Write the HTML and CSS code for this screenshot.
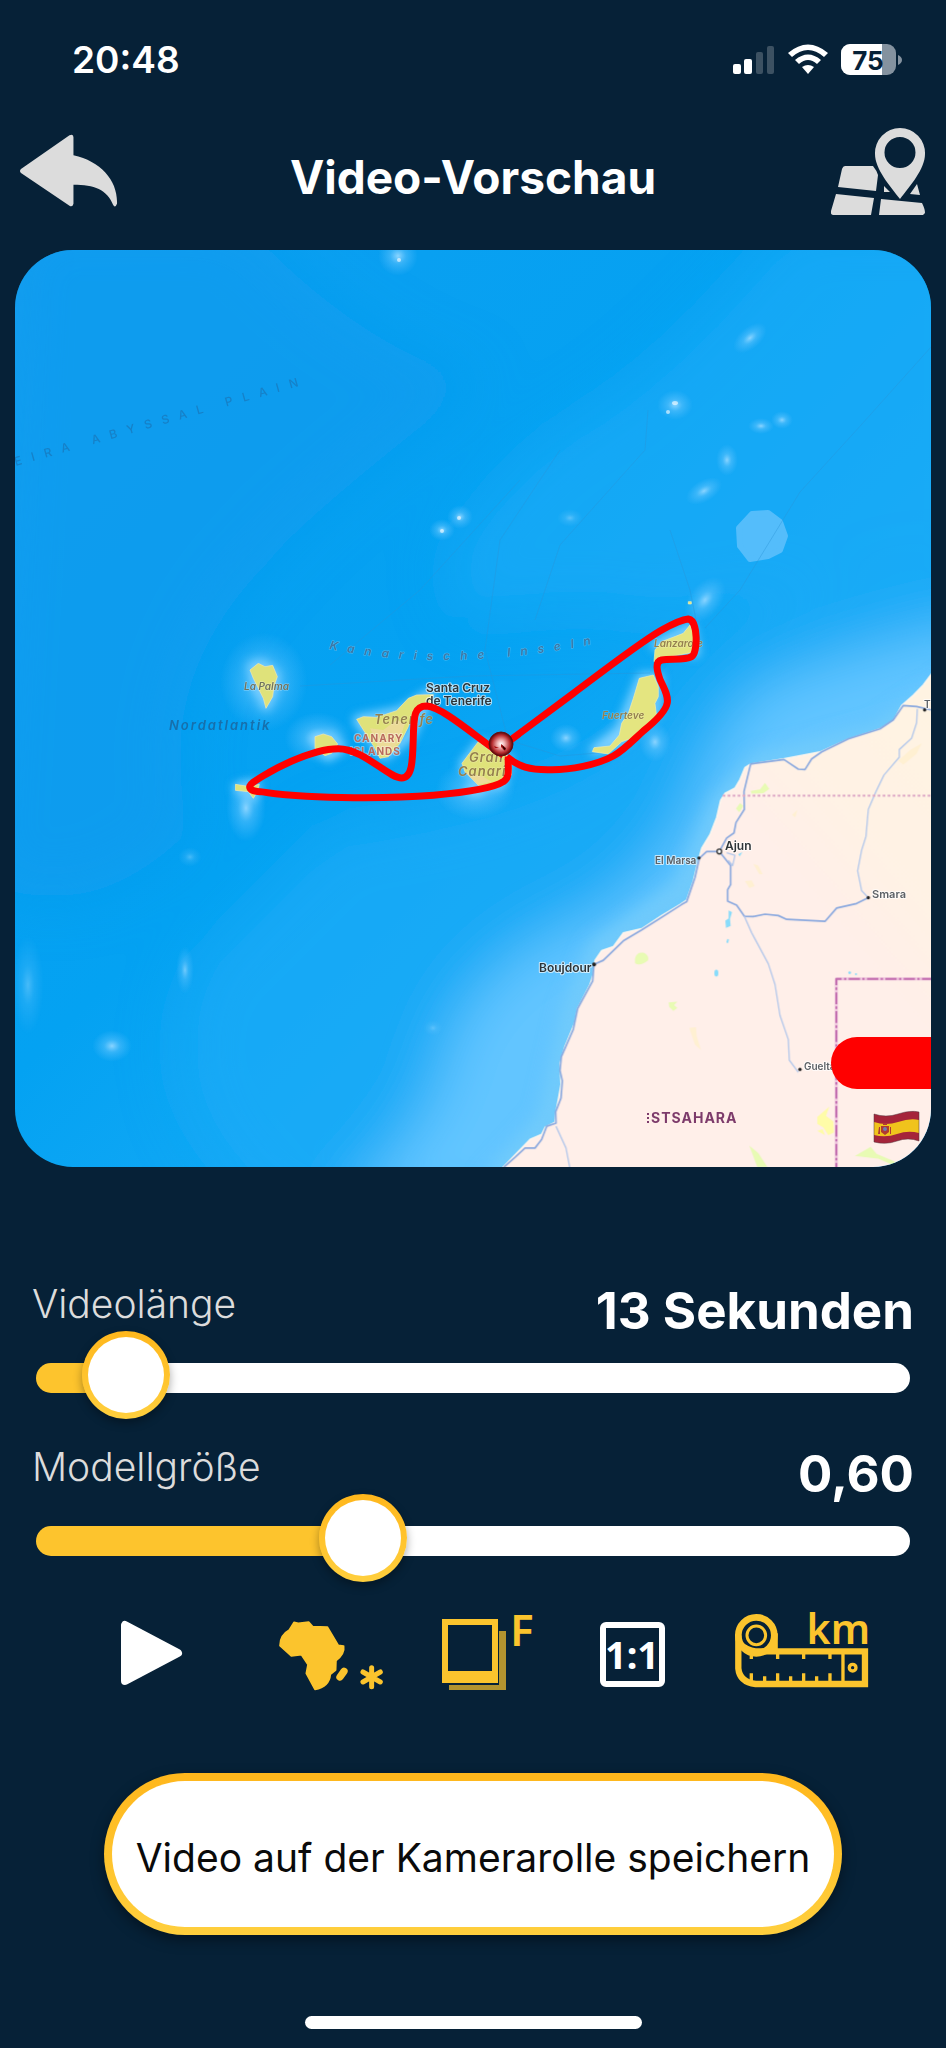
FILE: index.html
```html
<!DOCTYPE html>
<html lang="de">
<head>
<meta charset="utf-8">
<meta name="viewport" content="width=device-width, initial-scale=1">
<title>Video-Vorschau</title>
<link rel="stylesheet" href="styles.css">
</head>
<body class="screen">
<div class="status">
  <time class="clock">20:48</time>
  <svg class="status-icons" viewBox="733 43 170 34" role="img" aria-label="Mobilfunk, WLAN, Akku 75 Prozent">
    <g fill="#fff">
      <rect x="733" y="64" width="8" height="10" rx="2"/><rect x="744" y="59" width="8" height="15" rx="2"/>
      <rect x="756" y="52" width="7" height="22" rx="2" opacity=".22"/><rect x="767" y="46" width="7" height="28" rx="2" opacity=".22"/>
      <path d="M788 53 Q808 36 828 53 L824 57 Q808 43 792 57Z"/>
      <path d="M795 60 Q808 49 821 60 L817 64 Q808 56 799 64Z"/>
      <path d="M802 67 Q808 63 814 67 L808 74Z"/>
    </g>
    <clipPath id="cell"><rect x="841" y="44" width="55" height="31" rx="9"/></clipPath>
    <g clip-path="url(#cell)"><path fill="#84929f" d="M841 44h55v31h-55z"/><path fill="#fff" d="M841 44h41v31h-41z"/></g>
    <path fill="#84929f" d="M898 55q4 2 4 5t-4 5z"/>
    <text class="battery-text" x="868" y="70" text-anchor="middle">75</text>
  </svg>
</div>
<header class="bar">
  <button class="icon-btn" aria-label="Zurück">
    <svg class="back" viewBox="19 132 99 76"><path d="M20 168 L69 134 Q73 132 73 136 V154 C101 160 118 180 117 203 Q115 208 113 204 C107 189 94 184 73 184 V203 Q72 207 69 205 L20 172 Q18 170 20 168Z"/></svg>
  </button>
  <h1 class="title">Video-Vorschau</h1>
  <button class="icon-btn" aria-label="Karte">
    <svg class="map-icon" viewBox="831 127 95 89">
      <path d="M845 166h28q4 5 5 9l-2 16-38-4 4-18q1-3 3-3ZM836 194l38 4-3 17h-38q-3-1-2-4ZM881 199l41 4q3 6 3 10l-2 2h-44ZM884 186l6 6-6-0ZM917 184l3 11-10-1Z"/>
      <path fill-rule="evenodd" d="M900 128a25 25 0 0 1 25 26c0 15-15 32-25 45c-10-13-25-30-25-45a25 25 0 0 1 25-26Zm0 9a15 15 0 1 0 0 31a15 15 0 0 0 0-31Z"/>
    </svg>
  </button>
</header>
<main class="content">
<svg class="map" viewBox="15 250 916 917" role="img" aria-label="Karte der Kanarischen Inseln mit Reiseroute">
  <defs>
    <linearGradient id="sea" x2="1" y2="1"><stop offset="0" stop-color="#0e9ef0"/><stop offset=".45" stop-color="#04a2f2"/><stop offset="1" stop-color="#2db4fb"/></linearGradient>
    <radialGradient id="ball" cx=".5" cy=".5" r=".5"><stop offset="0" stop-color="#fff"/><stop offset=".3" stop-color="#f1b5b5"/><stop offset=".75" stop-color="#b52a2d"/><stop offset="1" stop-color="#4a0608"/></radialGradient>
    <radialGradient id="glow"><stop offset="0" stop-color="#8ad4ff"/><stop offset=".4" stop-color="#6cc8ff" stop-opacity=".45"/><stop offset="1" stop-color="#5cc0ff" stop-opacity="0"/></radialGradient>
    <linearGradient id="soil" x1="1" y1="0" x2=".55" y2=".45"><stop offset="0" stop-color="#fff4e2"/><stop offset=".55" stop-color="#fff2e5"/><stop offset=".8" stop-color="#ffefe9"/></linearGradient>
    <filter id="b30" x="-50%" y="-50%" width="200%" height="200%"><feGaussianBlur stdDeviation="28"/></filter>
    <filter id="b8" x="-50%" y="-50%" width="200%" height="200%"><feGaussianBlur stdDeviation="9"/></filter>
    <filter id="b4" x="-50%" y="-50%" width="200%" height="200%"><feGaussianBlur stdDeviation="5"/></filter>
    <path id="arc" d="M329 649 Q460 676 625 637"/>
    <path id="plain" d="M16 466 Q160 425 360 369"/>
  </defs>
  <path fill="url(#sea)" d="M15 250h916v917H15z"/>
  <g filter="url(#b30)">
    <path fill="#0e9bee" d="M15 220H240Q360 350 480 380Q300 520 270 560Q150 680 190 830Q90 930 -20 880Z" opacity=".8"/>
    <path fill="#1babf7" d="M990 220H790Q660 380 560 430Q400 560 470 620Q600 600 660 620L990 560Z" opacity=".7"/>
    <path fill="#1babf7" d="M330 830Q560 800 640 720Q780 560 990 560V900L400 1220H280Q130 1100 200 960Z" opacity=".7"/>
    <path fill="#62c5ff" d="M990 620Q840 650 755 690Q710 740 690 810Q650 885 580 920Q460 970 440 1070Q430 1120 330 1220H560L700 970L990 760Z"/>
  </g>
  <path filter="url(#b8)" fill="none" stroke="#72cbfb" stroke-width="24" d="M960 680L880 736 760 766 722 806 685 890 600 950 575 1010 550 1120 490 1187"/>
  <g fill="none" stroke="#7fd0ff" stroke-width="10" stroke-linejoin="round" filter="url(#b4)">
    <path d="M252 666L262 664 275 675 272 692 266 706 257 685ZM315 740L332 736 340 748 328 756ZM358 720L400 712 430 694 410 735 385 755ZM464 765L480 745 508 760 500 785 480 785ZM238 788L255 785 252 798ZM642 678L658 678 655 712 620 742 595 750 620 730ZM656 645L690 628 695 652Z"/>
  </g>
  <g fill="url(#glow)">
    <ellipse cx="264" cy="682" rx="44" ry="50"/><ellipse cx="318" cy="738" rx="34" ry="26"/><ellipse cx="246" cy="808" rx="20" ry="34"/><ellipse cx="475" cy="790" rx="40" ry="30"/>
    <ellipse cx="705" cy="600" rx="16" ry="26" transform="rotate(38 705 600)"/><ellipse cx="566" cy="738" rx="16" ry="14"/><ellipse cx="655" cy="742" rx="16" ry="20"/>
    <ellipse cx="675" cy="405" rx="18" ry="15"/><ellipse cx="750" cy="338" rx="20" ry="11" transform="rotate(-40 750 338)"/><ellipse cx="761" cy="426" rx="13" ry="8"/><ellipse cx="782" cy="420" rx="11" ry="9"/><ellipse cx="727" cy="460" rx="11" ry="16"/><ellipse cx="704" cy="491" rx="20" ry="11" transform="rotate(-30 704 491)"/>
    <ellipse cx="442" cy="530" rx="13" ry="11"/><ellipse cx="460" cy="517" rx="13" ry="12"/><ellipse cx="570" cy="518" rx="13" ry="9" opacity=".6"/><ellipse cx="398" cy="256" rx="20" ry="20"/>
    <ellipse cx="112" cy="1046" rx="20" ry="16"/><ellipse cx="185" cy="970" rx="9" ry="24" opacity=".8"/><ellipse cx="28" cy="985" rx="16" ry="50" opacity=".5"/><ellipse cx="190" cy="857" rx="12" ry="10" opacity=".5"/><ellipse cx="433" cy="1028" rx="10" ry="8" opacity=".5"/>
  </g>
  <g fill="#fff" opacity=".6">
    <ellipse cx="675" cy="403" rx="3" ry="2"/><circle cx="668" cy="412" r="2"/><circle cx="442" cy="531" r="2"/><circle cx="459" cy="518" r="2"/><circle cx="399" cy="260" r="2"/>
  </g>
  <path fill="#54bdfb" stroke="#54bdfb" stroke-width="6" stroke-linejoin="round" d="M752 514L768 513 780 522 785 536 780 550 768 556 750 559 740 546 739 528Z"/>
  <g fill="none" stroke="#2a93d6" stroke-width="1" opacity=".4">
    <path d="M931 347L862 424 800 492 740 590 705 628M648 410L645 450 560 545 535 620M560 450L500 540 485 650 508 740M330 665L420 590 520 480M670 530L690 590 700 640M300 686L470 676 650 673M508 740L560 756 610 752"/>
  </g>
  <g transform="translate(480 640) scale(.3333 .3444)" stroke-linejoin="round">
    <path fill="url(#soil)" stroke="#fff7ee" stroke-width="4" d="M1380 75L1353 100 1330 130 1300 160 1265 190 1240 235 1200 258 1100 290 1020 325 910 345 812 360 795 370 780 405 765 430 735 445 722 465 710 515 690 565 665 605 655 640 640 700 620 755 600 768 545 800 485 838 430 850 400 890 365 902 345 930 340 970 330 1000 293 1070 285 1110 255 1180 240 1230 243 1290 228 1370 225 1400 195 1415 185 1435 150 1450 115 1485 60 1540V1600H1380Z"/>
    <g fill="#e8fbb4">
      <path d="M812 438L840 434 855 415 868 432 850 445 815 446ZM768 490L780 474 790 482 778 500ZM465 925Q470 905 490 908 508 915 504 930 480 948 465 938ZM566 1052L592 1050 582 1060 592 1068 580 1077 568 1065ZM808 1468L835 1490 862 1530H832ZM1125 1498L1172 1472 1190 1492 1245 1515 1240 1525 1195 1506Z"/>
      <path fill="#fffca8" d="M1012 1385L1048 1355 1038 1382 1060 1398 1062 1430 1045 1438 1030 1415 1012 1405ZM1012 1425L1028 1420 1035 1438Z"/>
      <path fill="#fff0d2" d="M628 1126L648 1124 650 1150 663 1190 645 1175ZM795 700L815 698 824 715 808 720ZM820 650L835 655 848 680 838 680ZM936 508L952 493 946 515ZM1255 350L1290 320 1325 300 1310 330 1270 362Z"/>
    </g>
    <g fill="#88dcfb"><path d="M746 785L756 790 750 810 752 830 738 836 736 815 746 808ZM742 868l5 2-3 10-5-2Z"/><ellipse cx="709" cy="967" rx="6" ry="10"/><circle cx="1109" cy="966" r="4"/><circle cx="1128" cy="970" r="3"/><path d="M775 622l12-6-8 12Z"/></g>
    <g fill="none" stroke="#8ba9df" stroke-width="5">
      <path d="M1353 203L1310 193 1270 190 1240 232 1200 258 1105 287 1025 325 995 345 975 376 955 375 912 347 812 360 792 440 793 492 768 530 762 560 740 575 718 614 680 614 658 634 645 690 620 760 605 768 485 842 432 872 370 930 342 942 338 990 293 1070 280 1130 244 1210 240 1250 247 1280 243 1330 227 1370 228 1403 200 1412 185 1450 165 1475 135 1475 105 1502 72 1530M718 614L752 655V710L743 725V758L770 770 793 802 820 803 855 796 895 800 920 811 1035 817 1070 778 1130 765 1165 748"/>
      <path stroke="#b4c8eb" stroke-width="4" d="M1312 200L1310 240 1295 285 1258 318V340L1212 392 1188 440 1165 492 1158 570 1145 610 1133 670 1145 728 1165 748M793 802L815 850 865 940 885 1000 900 1090 925 1160 928 1220 955 1255M228 1412L258 1475 270 1535M740 618L765 625 758 655 745 640"/>
    </g>
    <path fill="none" stroke="#dda6c5" stroke-width="6" stroke-dasharray="8 7" d="M728 452H1360"/>
    <path fill="none" stroke="#efc6de" stroke-width="9" d="M1360 984H1069V1540"/>
    <path fill="none" stroke="#c26caf" stroke-width="6" stroke-dasharray="34 7 7 7" d="M1360 984H1069V1540"/>
    <g fill="#222"><circle cx="657" cy="633" r="5"/><circle cx="1165" cy="748" r="5"/><circle cx="342" cy="942" r="6"/><circle cx="960" cy="1247" r="5"/><circle cx="1334" cy="203" r="5"/></g>
    <circle cx="718" cy="614" r="7" fill="#fff" stroke="#333" stroke-width="4"/>
  </g>
  <g transform="translate(150 600) scale(.3333)" fill="#dfe27a" stroke="#f6e7b0" stroke-width="2" stroke-linejoin="round">
    <path d="M300 210L325 190 345 200 368 196 382 230 372 258 368 290 348 325 340 295 310 235ZM495 410L520 402 545 410 563 432 545 460 525 467 495 445ZM256 553L300 560 328 553 322 575 310 595 295 575 256 571ZM620 358L640 350 680 352 740 332 775 295 800 285 850 284 840 310 790 335 775 380 750 430 715 470 690 475 672 440ZM936 490L985 425 1025 455 1085 470 1085 525 1035 560 985 556 945 515Z"/>
    <path fill="#efd9a0" stroke="none" d="M660 385L700 390 740 360 765 370 745 430 710 460 690 465 680 430ZM945 515L1000 530 1025 545 985 554Z" opacity=".8"/>
  </g>
  <g transform="translate(440 580) scale(.3333)" fill="#e4e580" stroke="#f3edb0" stroke-width="2" stroke-linejoin="round">
    <path d="M745 65h9v7h-9ZM645 210L665 185 730 160 750 135 765 170 768 215 700 228 655 240 642 245ZM598 295L640 285 655 320 655 350 645 370 650 410 615 450 590 470 545 485 505 522 457 515 462 503 510 498 538 465 545 430 565 400 580 355Z"/>
  </g>
  <g class="place">
    <text class="p10 sea" x="244" y="690">La Palma</text>
    <text class="p13 ocean" x="169" y="730">Nordatlantik</text>
    <text class="p12 chain"><textPath href="#arc">Kanarische Inseln</textPath></text>
    <text class="p12 abyss"><textPath href="#plain">EIRA ABYSSAL PLAIN</textPath></text>
    <text class="p13 isle" x="374" y="724">Tenerife</text>
    <text class="p10 region" x="354" y="742">CANARY</text>
    <text class="p10 region" x="350" y="755">ISLANDS</text>
    <text class="p13 isle" x="469" y="762">Gran</text>
    <text class="p13 isle" x="458" y="776">Canari</text>
    <text class="p10 isle tight" x="654" y="647">Lanzarote</text>
    <text class="p10 isle tight" x="602" y="719">Fuerteve</text>
    <text class="p12 city" x="426" y="692">Santa Cruz</text>
    <text class="p12 city" x="426" y="705">de Tenerife</text>
    <text class="p12 city" x="725" y="850">Ajun</text>
    <text class="p12 city" x="539" y="972">Boujdour</text>
    <text class="p10 town" x="655" y="864">El Marsa</text>
    <text class="p11 town" x="872" y="898">Smara</text>
    <text class="p10 town" x="804" y="1070">Guelta</text>
    <text class="p10 town" x="924" y="708">T</text>
    <text class="p14 country" x="651" y="1123">STSAHARA</text>
  </g>
  <path stroke="#7d3b6b" stroke-width="2" stroke-dasharray="2 2" d="M648 1113v10"/>
  <g fill="none" stroke="#f00" stroke-width="21" stroke-linejoin="round">
    <path transform="translate(150 600) scale(.3333)" d="M1060 465C1000 430 880 320 830 318C790 318 792 355 790 410C788 480 788 534 755 534C715 534 640 446 565 446C480 446 355 515 308 548C290 562 300 573 330 575C500 600 740 595 850 586C950 577 1030 565 1060 545C1082 532 1073 505 1075 470"/>
    <path transform="translate(440 580) scale(.3333)" d="M185 500L400 340C500 265 600 188 660 153C700 130 725 119 745 117C775 120 774 220 755 230C735 241 695 236 665 240C643 245 652 275 660 298C672 325 685 345 682 368C678 395 645 425 610 453C580 480 550 512 520 528C470 555 390 570 330 569C270 570 235 560 200 530"/>
  </g>
  <circle cx="501" cy="744" r="12" fill="url(#ball)" stroke="#6b0d0f"/>
  <path fill="#a11" d="M494 746l5 2-4 0ZM501 744l5 4-1 3-4-4Z"/>
  <path fill="#200" d="M502 745l4 4-2 1Z"/>
  <path fill="#f00" d="M931 1037H857a26 26 0 0 0 0 52H931Z"/>
  <g transform="translate(0 16)">
    <path fill="#a5243a" d="M874 1098Q886 1102 898 1098T919 1096V1125Q908 1121 897 1125T874 1126Z"/>
    <path fill="#f0c31c" d="M874 1106Q886 1110 898 1106T919 1104V1117Q908 1114 897 1118T874 1119Z"/>
    <path fill="none" stroke="#51343b" stroke-opacity=".5" d="M874 1098Q886 1102 898 1098T919 1096V1125Q908 1121 897 1125T874 1126Z"/>
    <path fill="#b03a32" d="M881 1110h8v6l-4 3-4-3ZM879 1111h1v7h-2ZM890 1111h1v7h-1ZM883 1107h4v2h-4Z"/><circle cx="885" cy="1113" r="2" fill="#6e7fb0"/>
  </g>
</svg>
<section class="controls" aria-label="Einstellungen">
  <div class="field">
    <div class="field-head"><label for="len">Videolänge</label><output for="len">13 Sekunden</output></div>
    <input class="slider" id="len" type="range" min="5" max="141" value="13" style="--fill:.059">
  </div>
  <div class="field">
    <div class="field-head"><label for="size">Modellgröße</label><output for="size">0,60</output></div>
    <input class="slider" id="size" type="range" min="0.1" max="1.49" step="0.01" value="0.6" style="--fill:.36">
  </div>
</section>
<div class="tools">
  <button class="icon-btn" aria-label="Abspielen"><svg class="t-play" viewBox="120 1610 64 84"><path fill="#fff" stroke="#fff" stroke-width="8" stroke-linejoin="round" d="M125 1625V1681L178 1653Z"/></svg></button>
  <button class="icon-btn" aria-label="Kontinent"><svg class="t-africa" viewBox="279 1610 104 84">
    <g transform="translate(80 1590) scale(.3333)" fill="#fbc42d" stroke="#fbc42d" stroke-width="5" stroke-linejoin="round">
      <path d="M642 97L655 100 686 96 698 110 742 111 775 166 791 168Q795 192 768 212L767 240 751 253Q748 290 705 298L679 250 684 224 664 194 634 198 600 167Q600 135 628 120Z"/>
      <path stroke-width="22" stroke-linecap="round" d="M792 244L780 261"/>
      <path fill="none" stroke-width="15" stroke-linecap="round" d="M875 233V290M849 246L901 276M901 246L849 276"/>
    </g></svg></button>
  <button class="icon-btn" aria-label="Bilder pro Sekunde"><svg class="t-frame" viewBox="442 1610 90 84">
    <path fill="#b2932f" d="M500 1631h7v59h-57v-5h50Z"/>
    <path fill="#fbc42d" fill-rule="evenodd" d="M443 1619h56v64h-56Zm6 6v46h44v-46Z"/>
    <text class="t-f" x="511" y="1646">F</text></svg></button>
  <button class="icon-btn" aria-label="Seitenverhältnis 1:1"><svg class="t-ratio" viewBox="600 1610 65 84">
    <rect x="603" y="1625" width="59" height="59" rx="3" fill="none" stroke="#fff" stroke-width="6"/>
    <text class="t-one" x="632" y="1669" text-anchor="middle">1:1</text></svg></button>
  <button class="icon-btn" aria-label="Kilometer"><svg class="t-km" viewBox="736 1610 134 84">
    <g transform="translate(540 1590) scale(.3333)" fill="none" stroke="#fbc42d">
      <circle cx="652" cy="136" r="54" stroke-width="20" /><circle cx="652" cy="136" r="28" stroke-width="9"/>
      <path stroke-width="19" d="M598 136V235Q602 276 650 282H978V184H650Q625 182 600 160M707 130V184"/>
      <path stroke-width="10" d="M637 190V207M716 190V207M794 190V207M873 190V207M637 275V250M677 275V259M716 275V250M755 275V259M794 275V250M833 275V259M873 275V250M912 190V275"/>
      <circle cx="941" cy="233" r="10" stroke-width="10"/>
    </g>
    <text class="t-unit" x="871" y="1644" text-anchor="end">km</text></svg></button>
</div>
<button class="save">Video auf der Kamerarolle speichern</button>
</main>
<div class="home"></div>
</body>
</html>
```
FILE: styles.css
```css
* { box-sizing: border-box; }
.screen {
  margin: 0;
  min-height: 100vh;
  display: flex;
  flex-direction: column;
  background: #062137;
  color: #fff;
  font-family: Inter, "Liberation Sans", sans-serif;
}
button { font: inherit; }
.status {
  display: flex;
  justify-content: space-between;
  align-items: center;
  padding: 40px 43px 0 72px;
}
.clock { font-size: 37px; line-height: 40px; font-weight: 600; }
.status-icons { width: 170px; height: 34px; }
.battery-text { font: 700 26px Inter, sans-serif; fill: #062137; }
.bar {
  display: grid;
  grid-template-columns: 1fr auto 1fr;
  align-items: center;
  height: 170px;
  padding: 44px 20px 32px;
}
.bar .icon-btn:last-child { justify-self: end; }
.bar .icon-btn:first-child { justify-self: start; }
.icon-btn {
  display: flex;
  justify-content: center;
  align-items: center;
  padding: 0;
  border: 0;
  background: none;
}
.back { width: 98px; height: 76px; fill: #dcdcdc; }
.map-icon { width: 95px; height: 89px; fill: #dcdcdc; }
.title { margin: 0; padding-top: 12px; font-size: 46px; line-height: 56px; font-weight: 700; }
.content { display: flex; flex-direction: column; }
.map { display: block; margin: 0 15px; border-radius: 58px; }
.place text { font-family: Inter, sans-serif; paint-order: stroke; stroke-linejoin: round; }
.place .p10 { font-size: 10px; }
.place .p11 { font-size: 11px; }
.place .p12 { font-size: 12px; }
.place .p13 { font-size: 13px; }
.place .p14 { font-size: 14px; }
.place .sea { font-style: italic; font-weight: 600; fill: #71735d; stroke: #ffffff66; stroke-width: 1px; }
.place .ocean { font-style: italic; font-weight: 600; fill: #176fab; letter-spacing: 2px; }
.place .chain { font-style: italic; font-weight: 600; fill: #3d78a6; stroke: #ffffff44; stroke-width: 1px; letter-spacing: 10px; }
.place .abyss { font-weight: 500; fill: #1681c8; letter-spacing: 10px; }
.place .isle { font-style: italic; font-weight: 600; fill: #95804d; stroke: #ffffff44; stroke-width: 1px; letter-spacing: 1px; }
.place .tight { letter-spacing: 0; }
.place .region { font-weight: 700; fill: #b96a5d; stroke: #ffffff66; stroke-width: 2px; letter-spacing: 1px; }
.place .city { font-weight: 600; fill: #2d3438; stroke: #ffffffaa; stroke-width: 2px; }
.place .town { font-weight: 600; fill: #5d6166; stroke: #ffffffaa; stroke-width: 2px; }
.place .country { font-weight: 700; fill: #7d3b6b; letter-spacing: 1px; }
.controls { padding: 113px 32px 0; }
.field { height: 163px; }
.field-head { display: flex; justify-content: space-between; height: 60px; }
.field-head label { font-size: 39px; line-height: 48px; font-weight: 300; color: #dcdcdc; }
.field-head output { font-size: 51px; line-height: 62px; font-weight: 700; }
.slider {
  -webkit-appearance: none;
  appearance: none;
  display: block;
  width: calc(100% - 8px);
  height: 76px;
  margin: 0 4px;
  background: none;
}
.slider::-webkit-slider-runnable-track {
  height: 30px;
  border-radius: 15px;
  background: linear-gradient(to right, #fdc42d calc(44px + var(--fill) * (100% - 88px)), #fff 0);
}
.slider::-webkit-slider-thumb {
  -webkit-appearance: none;
  width: 88px;
  height: 88px;
  margin-top: -32px;
  border: 6px solid transparent;
  border-radius: 50%;
  background: linear-gradient(#fff, #fff) padding-box, linear-gradient(#ffb71c, #ffcf3d) border-box;
  box-shadow: 0 4px 10px #00000055;
}
.tools {
  display: grid;
  grid-template-columns: 181fr 178fr 132fr 160fr 180fr;
  padding: 4px 54px 0 61px;
}
.tools svg { height: 84px; overflow: visible; }
.t-play { width: 64px; }
.t-africa { width: 104px; }
.t-frame { width: 90px; }
.t-ratio { width: 65px; }
.t-km { width: 134px; }
.t-f { font: 600 44px "Noto Sans", sans-serif; fill: #fbc42d; }
.t-one { font: 700 38px "Noto Sans", sans-serif; fill: #fff; }
.t-unit { font: 600 41px "Noto Sans", sans-serif; fill: #fbc42d; }
.save {
  align-self: center;
  width: 78%;
  height: 162px;
  margin-top: 79px;
  padding: 8px 0 0;
  border: 8px solid transparent;
  border-radius: 81px;
  background: linear-gradient(#fff, #fff) padding-box, linear-gradient(#ffb71c, #ffcf3d) border-box;
  box-shadow: 0 5px 14px #00000066;
  color: #0a0a0a;
  font-size: 39px;
  line-height: 48px;
  white-space: nowrap;
}
.home { width: 337px; height: 13px; margin: auto auto 19px; border-radius: 7px; background: #fff; }
```
